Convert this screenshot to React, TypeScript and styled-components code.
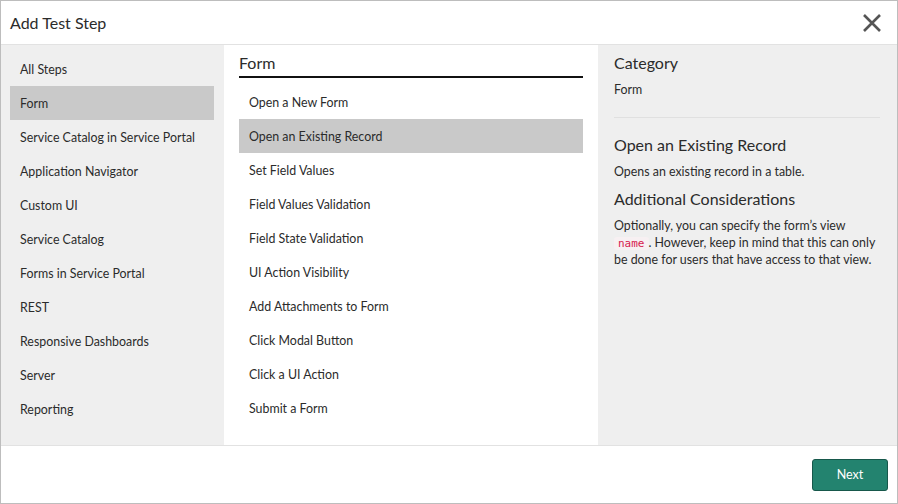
import React from "react";
import styled, { createGlobalStyle } from "styled-components";

const Global = createGlobalStyle`
  html, body { margin: 0; padding: 0; background: #fff; }
  body { font-family: "Lato", "Noto Sans", sans-serif; color: #2b2b2b; }
  * { box-sizing: border-box; }
`;

const Dialog = styled.div`
  width: 898px;
  height: 504px;
  border: 1px solid #bdbdbd;
  display: flex;
  flex-direction: column;
  background: #fff;
`;

const Header = styled.div`
  height: 44px;
  flex: none;
  display: flex;
  align-items: center;
  justify-content: space-between;
  padding: 0 14px 0 9px;
  border-bottom: 1px solid #e2e2e2;
`;

const Title = styled.h1`
  margin: 0;
  font-size: 16px;
  font-weight: 400;
  color: #2b2b2b;
`;

const CloseButton = styled.button`
  border: 0;
  background: none;
  padding: 0;
  width: 22px;
  height: 22px;
  display: flex;
  align-items: center;
  justify-content: center;
  cursor: pointer;
`;

const Body = styled.div`
  height: 400px;
  flex: none;
  display: grid;
  grid-template-columns: 223px 374px 1fr;
  overflow: hidden;
`;

const Sidebar = styled.div`
  background: #efefef;
  padding: 7px 10px 0 9px;
`;

const Item = styled.div<{ $active?: boolean }>`
  height: 34px;
  display: flex;
  align-items: center;
  padding: 0 10px;
  font-size: 12.4px;
  color: #2b2b2b;
  white-space: nowrap;
  background: ${(p) => (p.$active ? "#c9c9c9" : "transparent")};
  cursor: pointer;
`;

const Middle = styled.div`
  background: #fff;
  padding: 8px 15px 0 15px;
`;

const SectionTitle = styled.h2`
  margin: 0;
  font-size: 16px;
  font-weight: 400;
  line-height: 20px;
  padding-bottom: 3px;
  border-bottom: 2px solid #111;
  margin-bottom: 7px;
`;

const Detail = styled.div`
  background: #efefef;
  padding: 8px 17px 0 16px;
`;

const DetailHeading = styled.h3<{ $gap?: number }>`
  margin: ${(p) => p.$gap ?? 0}px 0 0;
  font-size: 16px;
  font-weight: 400;
  line-height: 20px;
`;

const Text = styled.p<{ $gap?: number }>`
  margin: ${(p) => p.$gap ?? 0}px 0 0;
  font-size: 12.4px;
  line-height: 17px;
`;

const Divider = styled.hr`
  border: 0;
  border-top: 1px solid #e0e0e0;
  margin: 19px 0 17px;
`;

const Code = styled.code`
  font-family: "DejaVu Sans Mono", monospace;
  font-size: 11px;
  line-height: 1;
  color: #d6204f;
  background: #f7f0f2;
  padding: 0 4px;
  border-radius: 3px;
`;

const Footer = styled.div`
  flex: 1;
  border-top: 1px solid #e2e2e2;
  display: flex;
  align-items: center;
  justify-content: flex-end;
  padding: 0 9px 0 0;
`;

const PrimaryButton = styled.button`
  width: 76px;
  height: 32px;
  background: #23836f;
  border: 1px solid #17584b;
  border-radius: 3px;
  color: #fff;
  font-family: inherit;
  font-size: 12.5px;
  cursor: pointer;
`;

const categories = [
  "All Steps",
  "Form",
  "Service Catalog in Service Portal",
  "Application Navigator",
  "Custom UI",
  "Service Catalog",
  "Forms in Service Portal",
  "REST",
  "Responsive Dashboards",
  "Server",
  "Reporting",
];

const steps = [
  "Open a New Form",
  "Open an Existing Record",
  "Set Field Values",
  "Field Values Validation",
  "Field State Validation",
  "UI Action Visibility",
  "Add Attachments to Form",
  "Click Modal Button",
  "Click a UI Action",
  "Submit a Form",
];

export default function App() {
  return (
    <>
      <Global />
      <Dialog>
        <Header>
          <Title>Add Test Step</Title>
          <CloseButton aria-label="Close">
            <svg width="20" height="20" viewBox="0 0 20 20">
              <path d="M2 2 L18 18 M18 2 L2 18" stroke="#555" strokeWidth="2.6" strokeLinecap="butt" />
            </svg>
          </CloseButton>
        </Header>
        <Body>
          <Sidebar>
            {categories.map((c) => (
              <Item key={c} $active={c === "Form"}>
                {c}
              </Item>
            ))}
          </Sidebar>
          <Middle>
            <SectionTitle>Form</SectionTitle>
            {steps.map((s) => (
              <Item key={s} $active={s === "Open an Existing Record"}>
                {s}
              </Item>
            ))}
          </Middle>
          <Detail>
            <DetailHeading>Category</DetailHeading>
            <Text $gap={8}>Form</Text>
            <Divider />
            <DetailHeading>Open an Existing Record</DetailHeading>
            <Text $gap={8}>Opens an existing record in a table.</Text>
            <DetailHeading $gap={9}>Additional Considerations</DetailHeading>
            <Text $gap={8}>
              Optionally, you can specify the form’s view <Code>name</Code>. However, keep in mind
              that this can only be done for users that have access to that view.
            </Text>
          </Detail>
        </Body>
        <Footer>
          <PrimaryButton>Next</PrimaryButton>
        </Footer>
      </Dialog>
    </>
  );
}
